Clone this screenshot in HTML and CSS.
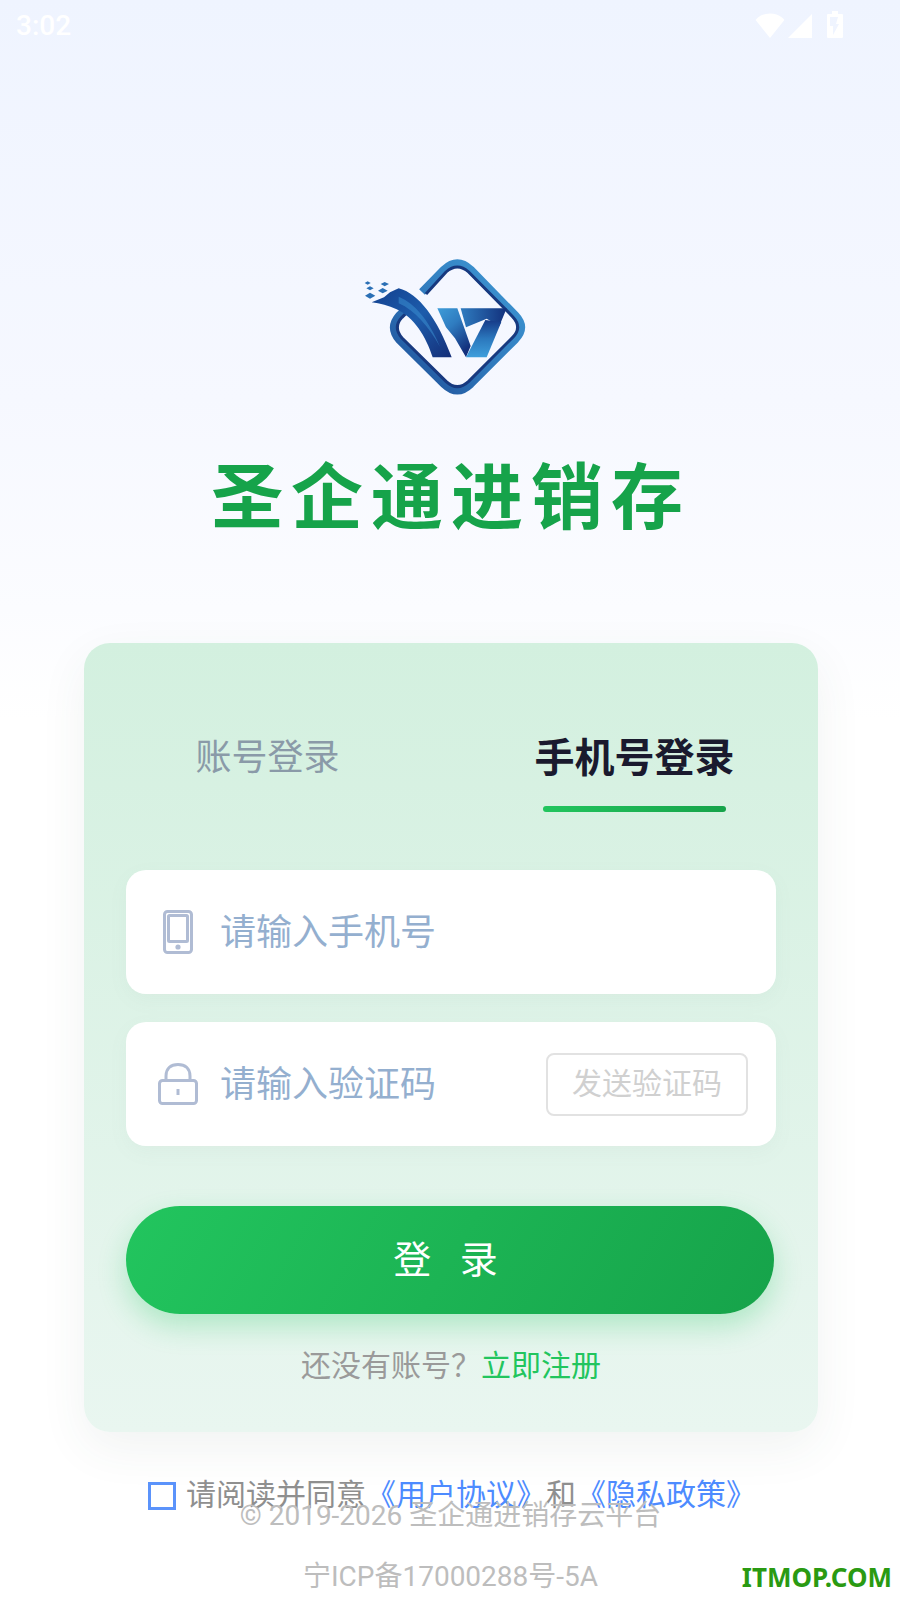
FILE: index.html
```html
<!DOCTYPE html>
<html lang="zh">
<head>
<meta charset="utf-8">
<title>圣企通进销存</title>
<link rel="stylesheet" href="styles.css">
</head>
<body>
<div class="page">
  <div class="status">
    <span class="time">3:02</span>
    <div class="status-icons">
      <svg class="ic-wifi" viewBox="0 0 30 25"><path fill="#fff" d="M15 25 L0.6 7 Q1 6 3 4.5 Q8 0.5 15 0.5 Q22 0.5 27 4.5 Q29 6 29.4 7 Z"/></svg>
      <svg class="ic-signal" viewBox="0 0 24 24"><path fill="#fff" d="M24 0 V24 H0 Z"/></svg>
      <svg class="ic-batt" viewBox="0 0 16 27"><path fill="#fff" fill-rule="evenodd" d="M5 0 H11 V3 H15 Q16 3 16 4 V26 Q16 27 15 27 H1 Q0 27 0 26 V4 Q0 3 1 3 H5 Z M5 6 L3 6 V15 H6 V24 L12 13 H9 L11 6 Z"/></svg>
    </div>
  </div>

  <div class="hero">
    <svg class="logo" viewBox="0 0 600 510">
      <defs>
        <linearGradient id="ring" x1="1" y1="0" x2="0" y2="1">
          <stop offset="0" stop-color="#3f9ad6"/>
          <stop offset=".55" stop-color="#2f78bb"/>
          <stop offset="1" stop-color="#1c4a94"/>
        </linearGradient>
        <linearGradient id="swoosh" x1="0" y1="0" x2="1" y2="1">
          <stop offset="0" stop-color="#13408f"/>
          <stop offset=".5" stop-color="#1d5cab"/>
          <stop offset="1" stop-color="#142e78"/>
        </linearGradient>
        <linearGradient id="wleft" x1="0" y1="0" x2=".6" y2="1">
          <stop offset="0" stop-color="#3e9cd8"/>
          <stop offset=".45" stop-color="#2f7cc0"/>
          <stop offset="1" stop-color="#13307c"/>
        </linearGradient>
        <linearGradient id="seven" x1="0" y1="0" x2="0" y2="1">
          <stop offset="0" stop-color="#163a88"/>
          <stop offset=".5" stop-color="#2b78bd"/>
          <stop offset="1" stop-color="#3f9fdc"/>
        </linearGradient>
        <linearGradient id="bar" x1="0" y1="0" x2="1" y2="0">
          <stop offset="0" stop-color="#2f7cc0"/>
          <stop offset="1" stop-color="#12307c"/>
        </linearGradient>
      </defs>
      <path class="ring-outer" d="M246 156 L312 89 Q352 52 392 89 L526 226 Q560 262 526 298 L392 432 Q352 470 312 432 L178 300 Q146 262 178 226 L194 211"/>
      <path class="ring-inner" d="M258 162 L318 96 Q352 66 386 96 L518 230 Q548 262 518 292 L386 424 Q352 456 318 424 L186 294 Q158 262 186 232 L198 220"/>
      <g fill="#2a6fb5">
        <path d="M74 129 L83 124 L92 129 L83 134 Z"/>
        <path d="M122 132 L134 126 L147 132 L134 139 Z"/>
        <path d="M79 145 L90 139 L101 145 L90 151 Z"/>
        <path d="M114 152 L128 144 L143 152 L128 160 Z"/>
        <path d="M75 167 L90 158 L106 167 L90 176 Z"/>
      </g>
      <path fill="url(#swoosh)" d="M95 187 L132 172 L150 157 L176 145 C236 160 292 236 335 352 L278 352 C258 290 222 232 170 208 C146 197 120 190 95 187 Z"/>
      <path fill="#3a8ecf" opacity=".55" d="M176 170 C226 190 268 244 300 320 C264 258 226 212 176 190 Z"/>
      <path fill="url(#wleft)" d="M292 205 H352 L392 318 L378 352 L345 295 L318 262 Z"/>
      <path fill="url(#bar)" d="M362 205 H500 L478 258 L440 236 L378 262 Z"/>
      <path fill="url(#seven)" d="M436 240 L484 246 L440 352 H378 Z"/>
    </svg>
    <h1 class="title">圣企通进销存</h1>
  </div>

  <div class="card">
    <div class="tabs">
      <div class="tab">账号登录</div>
      <div class="tab tab-active">手机号登录<span class="tab-line"></span></div>
    </div>
    <div class="form">
      <div class="field">
        <svg class="ic-phone" viewBox="0 0 30 44">
          <rect class="ic-s" x="1.5" y="1.5" width="27" height="41" rx="3"/>
          <rect class="ic-s" x="5.5" y="5.5" width="19" height="26" rx="1"/>
          <circle cx="15" cy="37" r="2.6" fill="#b0bcd4"/>
        </svg>
        <span class="ph">请输入手机号</span>
      </div>
      <div class="field">
        <svg class="ic-lock" viewBox="0 0 40 42">
          <rect class="ic-s" x="1.5" y="17.5" width="37" height="23" rx="3"/>
          <path class="ic-s" d="M8 17 V13 C8 5 13 1.5 20 1.5 C27 1.5 32 5 32 13 V17"/>
          <path class="ic-s" d="M20 26 V32"/>
        </svg>
        <span class="ph">请输入验证码</span>
        <span class="send">发送验证码</span>
      </div>
      <button class="login" type="button">登 录</button>
      <p class="reg">还没有账号？<a class="reg-link">立即注册</a></p>
    </div>
  </div>

  <div class="agree">
    <span class="check"></span>
    <span class="agree-text">请阅读并同意<a class="link">《用户协议》</a>和<a class="link">《隐私政策》</a></span>
  </div>

  <div class="footer">
    <p class="copy">© 2019-2026 圣企通进销存云平台</p>
    <p class="icp">宁ICP备17000288号-5A</p>
  </div>
  <div class="mark">ITMOP.COM</div>
</div>
</body>
</html>
```

FILE: styles.css
```css
* { box-sizing: border-box; }
html, body { margin: 0; padding: 0; }
body { font-family: Roboto, "Noto Sans CJK SC", sans-serif; background: #fff; }
.page {
  position: relative;
  width: 900px;
  height: 1600px;
  overflow: hidden;
  background: linear-gradient(180deg, #eff4ff 0%, #f6f8ff 25%, #fbfcff 38%, #ffffff 45%);
}
.status {
  height: 50px;
  display: flex;
  justify-content: space-between;
  align-items: center;
  padding: 0 57px 0 16px;
  color: #fff;
}
.time { font-size: 28px; font-weight: 500; }
.status-icons { display: flex; align-items: flex-end; height: 27px; margin-top: -2px; }
.ic-wifi { width: 30px; height: 25px; }
.ic-signal { width: 24px; height: 24px; margin-left: 3px; }
.ic-batt { width: 16px; height: 27px; margin-left: 15px; }
.hero { display: flex; flex-direction: column; align-items: center; }
.logo { display: block; width: 200px; height: 170px; margin: 190px 20px 0 0; }
.ring-outer { fill: none; stroke: url(#ring); stroke-width: 24; stroke-linejoin: round; }
.ring-inner { fill: none; stroke: #17397f; stroke-width: 9; }
.title {
  margin: 42px 0 0 2px;
  font-family: "Noto Sans CJK SC", sans-serif;
  font-size: 72px;
  line-height: 80px;
  font-weight: 700;
  letter-spacing: 8px;
  color: #16a34a;
}
.card {
  width: 734px;
  height: 789px;
  margin: 111px 0 0 84px;
  border-radius: 26px;
  background: linear-gradient(180deg, #d3f0df 0%, #e9f6f0 100%);
  box-shadow: 0 16px 48px rgba(60, 80, 70, .07);
}
.tabs { display: flex; padding-top: 83px; }
.tab {
  flex: 1;
  height: 86px;
  text-align: center;
  font-size: 36px;
  line-height: 56px;
  color: #8a9aa8;
  font-family: "Noto Sans CJK SC", sans-serif;
}
.tab-active { padding-top: 1px; font-size: 40px; font-weight: 700; color: #1a1a2e; }
.tab-line {
  display: block;
  width: 183px;
  height: 6px;
  margin: 23px auto 0;
  border-radius: 3px;
  background: linear-gradient(90deg, #22c55e, #16a34a);
}
.form { padding: 58px 42px 0; }
.field {
  display: flex;
  align-items: center;
  height: 124px;
  margin-bottom: 28px;
  padding: 0 28px 0 0;
  border-radius: 20px;
  background: #fff;
  box-shadow: 0 6px 20px rgba(120, 140, 130, .05);
}
.ic-s { fill: none; stroke: #b0bcd4; stroke-width: 3; }
.ic-phone { width: 30px; height: 44px; margin: 0 27px 0 37px; }
.ic-lock { width: 40px; height: 42px; margin: 0 22px 0 32px; }
.ph { flex: 1; padding-bottom: 6px; font-size: 36px; color: #94afcf; font-family: "Noto Sans CJK SC", sans-serif; }
.send {
  width: 202px;
  height: 63px;
  border: 2px solid #e2e2e2;
  border-radius: 8px;
  text-align: center;
  font-size: 30px;
  line-height: 53px;
  color: #d0d0d0;
  font-family: "Noto Sans CJK SC", sans-serif;
}
.login {
  display: block;
  width: 648px;
  height: 108px;
  margin: 60px 0 0;
  padding: 0 0 8px 1px;
  border: 0;
  border-radius: 54px;
  background: linear-gradient(120deg, #22c55e 0%, #16a34a 100%);
  box-shadow: 0 12px 28px rgba(34, 197, 94, .28);
  color: #fff;
  font-size: 38px;
  letter-spacing: 10px;
  font-family: "Noto Sans CJK SC", sans-serif;
}
.reg {
  margin: 27px 0 0;
  text-align: center;
  font-size: 30px;
  line-height: 44px;
  color: #9a9a9a;
  font-family: "Noto Sans CJK SC", sans-serif;
}
.reg-link { color: #22c55e; }
.agree { display: flex; align-items: center; margin: 50px 0 0; padding-left: 148px; height: 27px; }
.check { width: 28px; height: 28px; border: 3px solid #5b93fb; margin-right: 10px; flex: none; }
.agree-text { padding-bottom: 8px; font-size: 30px; line-height: 44px; color: #8f8f8f; font-family: "Noto Sans CJK SC", sans-serif; white-space: nowrap; }
.link { color: #4d8bff; }
.footer { position: absolute; left: 1px; right: 0; top: 1496px; text-align: center; font-size: 28px; color: #bdbdbd; font-family: Roboto, "Noto Sans CJK SC", sans-serif; }
.copy { margin: 0; line-height: 40px; }
.icp { margin: 21px 0 0; line-height: 40px; }
.mark { position: absolute; right: 8px; top: 1558px; font-family: "Noto Sans", sans-serif; font-size: 26px; line-height: 38px; font-weight: 700; color: #2a9a12; }
```
